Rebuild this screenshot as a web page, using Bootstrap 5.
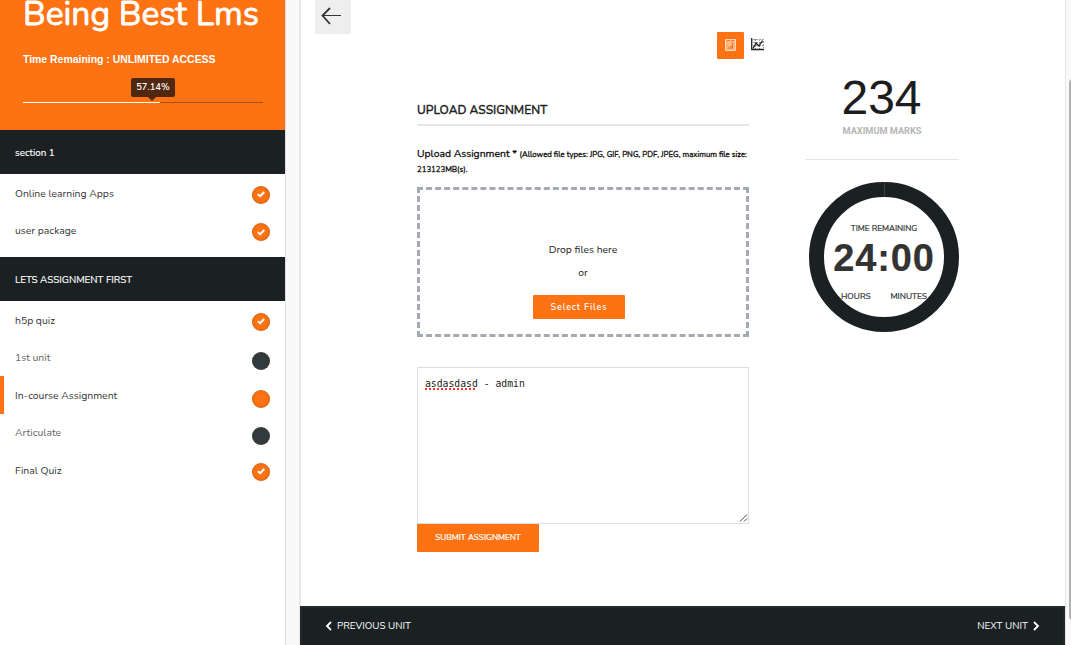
<!DOCTYPE html>
<html lang="en">
<head>
<meta charset="utf-8">
<title>Being Best Lms</title>
<link rel="stylesheet" href="https://cdn.jsdelivr.net/npm/bootstrap@5.3.0/dist/css/bootstrap.min.css">
<style>
:root{--flame:#fd7314;--ink:#1b2023}
body{font-family:Nunito,Lato,sans-serif;font-size:10.4px;line-height:16px;color:#333;background:#f9f9f9;height:645px;overflow:hidden}
.side{width:286px;border-right:1px solid #dfdfdf}
.hero{display:flow-root;height:130px;background:var(--flame);padding:0 23px}
.hero h1{font-size:33.6px;line-height:40px;margin:-6px 0 0;font-weight:400;-webkit-text-stroke:.8px #fff;white-space:nowrap}
.remain{font:bold 10.45px/16px "Liberation Sans",sans-serif;margin-top:18px}
.meter{height:1px;margin-top:34px;width:240px;background:#a3501b;border-radius:0;overflow:visible}
.meter .progress-bar{background:#fff}
.tip{left:108px;top:-24px;width:44px;height:19px;background:#50280f;border-radius:2px;font-size:9.4px;line-height:18px;font-weight:600}
.tip::after{content:"";position:absolute;left:17px;top:19px;border:4px solid transparent;border-top-color:#50280f;border-bottom:0}
.sect{height:44px;background:var(--ink);padding:1px 15px 0;font-size:9.8px;-webkit-text-stroke:.15px #fff}
.units{padding:0 0 8px}
.units li{height:37.5px;padding:2px 15px 0}
.units li.todo{color:#666}
.units li.now{box-shadow:inset 4px 0 var(--flame)}
.dot{width:18px;height:18px;border-radius:50%;background:var(--flame);box-shadow:inset 0 0 3px rgba(110,60,10,.5);margin-top:2px}
.low .dot{margin-top:6px}
.todo .dot{background:#2f3b3e}
.pane{margin-left:13px;width:767px;border:solid #e6e6e6;border-width:0 1px 0 2px;background:#fff}
.back{width:36px;height:34px;margin-left:14px;background:#eee}
.work{margin-left:116px;width:332px}
.tabs{height:27px;margin-top:-2px;padding-left:300px}
.tab{width:27px;height:27px;padding-bottom:2px;border-radius:1px;background:var(--flame)}
.chart{margin:-2px 0 0 7px}
.ttl{margin:43px 0 0;height:24px;font-size:12px;line-height:17px;border-bottom:2px solid #e5e5e5;color:#222;-webkit-text-stroke:.35px #222}
.lbl{margin-top:21px;height:29px;line-height:14px;font-size:10.4px;color:#111;-webkit-text-stroke:.3px #111;white-space:nowrap}
.lbl small{font-size:7.82px}
.drop{height:150px;margin-top:11px;border:3px dashed #a5aab1;padding-top:52px;color:#222}
.or{margin-top:7px}
.pick{width:92px;height:24px;margin:14px 8px 0 0;border-radius:1px;background:var(--flame);font-size:9px;font-weight:600;letter-spacing:.8px}
.note{width:332px;height:157px;margin-top:30px;border:1px solid #ddd;padding:8px 7px;font:9.75px/16px "DejaVu Sans Mono",monospace;color:#222;background:#fff}
.sq{text-decoration:underline dotted #f33 1.5px;text-underline-offset:1px}
.send{width:122px;height:28px;border-radius:1px;background:var(--flame);font-size:8.2px;-webkit-text-stroke:.2px #fff}
.info{margin-left:56px;width:154px;color:#333}
.marks{font:48px/50px "Liberation Sans",sans-serif;color:#1d1d1d;margin:39px 1px 0 0}
.cap{font:bold 9.2px/14px Roboto,sans-serif;color:#b5b5b5;margin-top:1px}
.info hr{margin:21px 0 22px;opacity:1;color:#ddd;border-top-color:#e5e5e5}
.clock{width:150px;height:150px;border:15px solid var(--ink);border-radius:50%;margin-left:4px;padding-top:26px;font-size:8.2px;line-height:12px;-webkit-text-stroke:.2px #333}
.clock::before{content:"";position:absolute;left:60px;top:-15px;width:1px;height:14px;background:#3b4346}
.digits{font:bold 38px/46px "Liberation Sans",sans-serif;letter-spacing:.9px}
.unitrow{padding:10px 17px 0;font-size:8.4px}
.foot{height:39px;margin-left:-1px;background:var(--ink);box-shadow:inset 2px 2px #20292b,inset -2px 0 #20292b;padding:0 25px;font-size:9.85px}
.thumb{width:8px;height:541px;top:79px;left:1069px;background:#b3b3b3;border-radius:4px}
.foot span{gap:5px}
</style>
</head>
<body class="d-flex">
<aside class="side bg-white flex-shrink-0">
 <div class="hero text-white">
  <h1>Being Best Lms</h1>
  <div class="remain">Time Remaining : UNLIMITED ACCESS</div>
  <div class="progress meter position-relative"><div class="progress-bar" style="width:57.14%"></div><div class="tip position-absolute text-center">57.14%</div></div>
 </div>
 <div class="sect text-white d-flex align-items-center">section 1</div>
 <ul class="units list-unstyled m-0">
  <li class="d-flex align-items-center justify-content-between"><span>Online learning Apps</span><i class="dot d-flex"><svg class="m-auto" width="10" height="9"><path d="M1.8 4.2 4.2 6.2 8.2 2" fill="none" stroke="#fff" stroke-width="2"/></svg></i></li>
  <li class="d-flex align-items-center justify-content-between"><span>user package</span><i class="dot d-flex"><svg class="m-auto" width="10" height="9"><path d="M1.8 4.2 4.2 6.2 8.2 2" fill="none" stroke="#fff" stroke-width="2"/></svg></i></li>
 </ul>
 <div class="sect text-white d-flex align-items-center">LETS ASSIGNMENT FIRST</div>
 <ul class="units list-unstyled m-0">
  <li class="d-flex align-items-center justify-content-between"><span>h5p quiz</span><i class="dot d-flex"><svg class="m-auto" width="10" height="9"><path d="M1.8 4.2 4.2 6.2 8.2 2" fill="none" stroke="#fff" stroke-width="2"/></svg></i></li>
  <li class="todo low d-flex align-items-center justify-content-between"><span>1st unit</span><i class="dot"></i></li>
  <li class="now low d-flex align-items-center justify-content-between"><span>In-course Assignment</span><i class="dot"></i></li>
  <li class="todo low d-flex align-items-center justify-content-between"><span>Articulate</span><i class="dot"></i></li>
  <li class="d-flex align-items-center justify-content-between"><span>Final Quiz</span><i class="dot d-flex"><svg class="m-auto" width="10" height="9"><path d="M1.8 4.2 4.2 6.2 8.2 2" fill="none" stroke="#fff" stroke-width="2"/></svg></i></li>
 </ul>
</aside>
<main class="pane d-flex flex-column flex-shrink-0">
 <div class="back"><svg width="36" height="34" fill="none" stroke="#333"><path d="M7 15.500H26"/><path d="M15 8 7.500 15.500 15 24" stroke-width="1.8"/></svg></div>
 <div class="d-flex flex-grow-1">
  <section class="work">
   <div class="tabs d-flex align-items-center">
    <div class="tab d-flex flex-shrink-0"><svg class="m-auto" width="11" height="12"><path d="M.5.5h10v11H.5z" fill="#fdb27a" stroke="#ffd9ba"/><path d="M2 1.500h2.500M6.500 1.500H9" stroke="#fd7314"/><path d="M3 3.500h3M3 5.500h3" stroke="#fec79c"/><path d="M7.500 3.500V9M3 9H8M5.500 7.500H8" stroke="#fd7314" fill="none"/></svg></div>
    <svg class="chart flex-shrink-0" width="13" height="13" fill="none" stroke="#222"><path d="M2 1.500H12.500V10M2 4.500H12M2 7.500H12M4.500 1V11M8.500 1V11" stroke="#999" stroke-dasharray="2 1"/><path d="M.7 0V11.500H13" stroke-width="1.300"/><path d="M2 10.500 5 5 8 8 11.500 2.500" stroke-width="1.300"/></svg>
   </div>
   <h2 class="ttl">UPLOAD ASSIGNMENT</h2>
   <div class="lbl">Upload Assignment * <small class="p-0">(Allowed file types: JPG, GIF, PNG, PDF, JPEG, maximum file size:<br>213123MB(s).</small></div>
   <div class="drop d-flex flex-column align-items-center"><span>Drop files here</span><span class="or">or</span><div class="pick text-white d-flex align-items-center justify-content-center">Select Files</div></div>
   <div class="note position-relative"><span class="sq">asdasdasd</span> - admin<svg class="position-absolute bottom-0 end-0" width="9" height="10" stroke="#444"><path d="M1 8.500 8 1.500M5 8.500 8 5.500"/></svg></div>
   <div class="send text-white d-flex align-items-center justify-content-center">SUBMIT ASSIGNMENT</div>
  </section>
  <section class="info text-center">
   <div class="marks">234</div>
   <div class="cap">MAXIMUM MARKS</div>
   <hr>
   <div class="clock position-relative"><div>TIME REMAINING</div><div class="digits">24:00</div><div class="unitrow d-flex justify-content-between"><span>HOURS</span><span>MINUTES</span></div></div>
  </section>
 </div>
 <footer class="foot text-white d-flex align-items-center justify-content-between"><span class="d-flex align-items-center"><svg width="7" height="10" fill="none" stroke="#fff" stroke-width="1.8"><path d="M6 1 2 5 6 9"/></svg>PREVIOUS UNIT</span><span class="d-flex align-items-center">NEXT UNIT<svg width="7" height="10" fill="none" stroke="#fff" stroke-width="1.8"><path d="M1 1 5 5 1 9"/></svg></span></footer>
</main>
<div class="thumb position-absolute"></div>
<script src="https://cdn.jsdelivr.net/npm/bootstrap@5.3.0/dist/js/bootstrap.bundle.min.js"></script>
</body>
</html>
